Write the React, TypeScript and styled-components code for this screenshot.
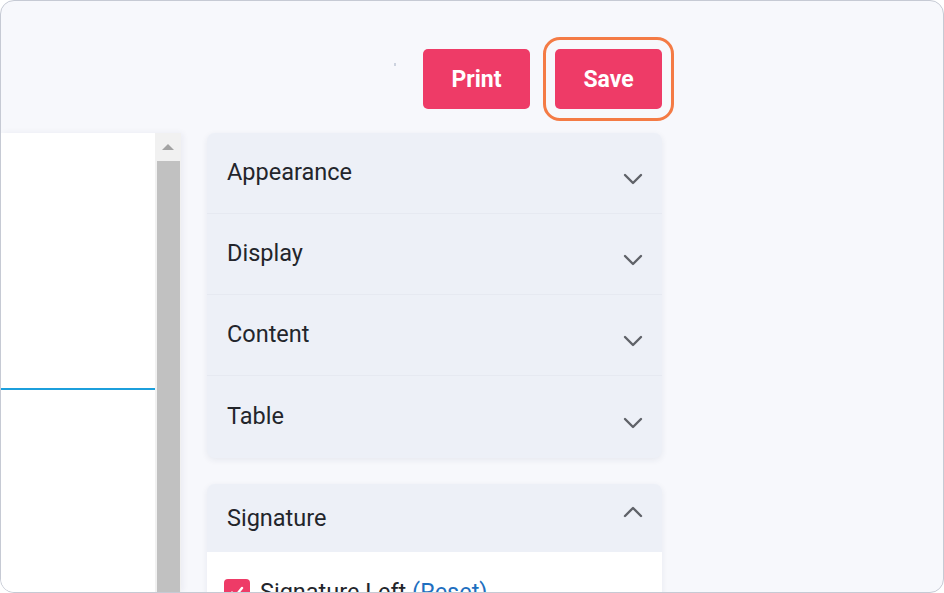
import React from 'react'
import styled, { createGlobalStyle } from 'styled-components'

const GlobalStyle = createGlobalStyle`
  html, body {
    margin: 0;
    padding: 0;
    background: #ffffff;
  }
  * {
    box-sizing: border-box;
  }
`

const Frame = styled.div`
  width: 944px;
  height: 593px;
  border: 1px solid #c6cad4;
  border-radius: 14px;
  background: #f7f8fc;
  overflow: hidden;
  display: flex;
  flex-direction: column;
  font-family: Roboto, 'Liberation Sans', sans-serif;
`

const Toolbar = styled.div`
  width: 661px;
  height: 132px;
  padding-top: 48px;
  display: flex;
  justify-content: flex-end;
  align-items: flex-start;
  gap: 25px;
  flex-shrink: 0;
`

const Speck = styled.span`
  width: 2px;
  height: 3px;
  margin-top: 14px;
  margin-right: 2px;
  background: #cdd3df;
`

const Button = styled.button<{ $focused?: boolean }>`
  width: 107px;
  height: 60px;
  border: none;
  border-radius: 5px;
  background: #ee3b67;
  color: #ffffff;
  font-family: Roboto, 'Liberation Sans', sans-serif;
  font-weight: 700;
  font-size: 23px;
  cursor: pointer;
  outline: ${(p) => (p.$focused ? '3px solid #f47b45' : 'none')};
  outline-offset: 9px;
`

const Body = styled.div`
  flex: 1;
  display: flex;
  align-items: flex-start;
  min-height: 0;
`

const Preview = styled.div`
  width: 180px;
  height: 100%;
  display: flex;
  background: #ffffff;
  border-bottom-left-radius: 12px;
  box-shadow: 2px 0 6px rgba(30, 40, 80, 0.06);
`

const Page = styled.div`
  width: 154px;
  height: 100%;
  padding-top: 255px;
`

const Rule = styled.div`
  height: 2px;
  background: #1c9fdc;
`

const Scrollbar = styled.div`
  width: 26px;
  height: 100%;
  background: #f1f1f1;
  display: flex;
  flex-direction: column;
  align-items: center;
`

const ScrollArrow = styled.div`
  height: 28px;
  width: 100%;
  display: flex;
  align-items: center;
  justify-content: center;
  &::before {
    content: '';
    border-left: 6px solid transparent;
    border-right: 6px solid transparent;
    border-bottom: 6px solid #a3a3a3;
  }
`

const Thumb = styled.div`
  flex: 1;
  width: 23px;
  background: #c1c1c1;
`

const Sidebar = styled.div`
  width: 455px;
  margin-left: 26px;
  display: flex;
  flex-direction: column;
  gap: 26px;
`

const Card = styled.div`
  background: #edf0f7;
  border-radius: 8px;
  box-shadow: 0 2px 6px rgba(40, 50, 90, 0.08);
  overflow: hidden;
`

const Row = styled.div<{ $last?: boolean }>`
  height: ${(p) => (p.$last ? '82px' : '81px')};
  padding: 0 19px 0 20px;
  display: flex;
  align-items: center;
  justify-content: space-between;
  border-bottom: ${(p) => (p.$last ? 'none' : '1px solid #e6e9f1')};
`

const RowHead = styled(Row)`
  height: 68px;
  border-bottom: none;
`

const Label = styled.span<{ $shift?: number }>`
  font-size: 23.5px;
  color: #23252b;
  margin-top: ${(p) => p.$shift ?? -2}px;
`

const Chevron = styled.svg<{ $up?: boolean }>`
  width: 20px;
  height: 12px;
  margin-top: ${(p) => (p.$up ? '-12px' : '12px')};
  transform: ${(p) => (p.$up ? 'rotate(180deg)' : 'none')};
`

const SectionBody = styled.div`
  background: #ffffff;
  padding: 26px 17px 20px;
  display: flex;
  align-items: center;
  gap: 10px;
`

const Check = styled.span`
  width: 26px;
  height: 26px;
  border-radius: 4px;
  background: #ee3b67;
  display: flex;
  align-items: center;
  justify-content: center;
`

const OptionText = styled.span`
  font-size: 23.5px;
  color: #23252b;
`

const Link = styled.a`
  color: #1e6fc0;
  text-decoration: none;
`

const ChevronIcon: React.FC<{ up?: boolean }> = ({ up }) => (
  <Chevron $up={up} viewBox="0 0 20 12">
    <path d="M2 2 L10 10 L18 2" fill="none" stroke="#5f6268" strokeWidth="2.4" strokeLinecap="round" strokeLinejoin="round" />
  </Chevron>
)

const sections = ['Appearance', 'Display', 'Content', 'Table']

const App: React.FC = () => {
  return (
    <>
      <GlobalStyle />
      <Frame>
        <Toolbar>
          <Speck />
          <Button type="button">Print</Button>
          <Button type="button" $focused>
            Save
          </Button>
        </Toolbar>
        <Body>
          <Preview>
            <Page>
              <Rule />
            </Page>
            <Scrollbar>
              <ScrollArrow />
              <Thumb />
            </Scrollbar>
          </Preview>
          <Sidebar>
            <Card>
              {sections.map((name, i) => (
                <Row key={name} $last={i === sections.length - 1}>
                  <Label>{name}</Label>
                  <ChevronIcon />
                </Row>
              ))}
            </Card>
            <Card>
              <RowHead>
                <Label $shift={0}>Signature</Label>
                <ChevronIcon up />
              </RowHead>
              <SectionBody>
                <Check>
                  <svg width="16" height="16" viewBox="0 0 16 16">
                    <path d="M3 8.5 L6.5 12 L13 4" fill="none" stroke="#ffffff" strokeWidth="2.4" strokeLinecap="round" strokeLinejoin="round" />
                  </svg>
                </Check>
                <OptionText>
                  Signature Left <Link href="#">(Reset)</Link>
                </OptionText>
              </SectionBody>
            </Card>
          </Sidebar>
        </Body>
      </Frame>
    </>
  )
}

export default App
